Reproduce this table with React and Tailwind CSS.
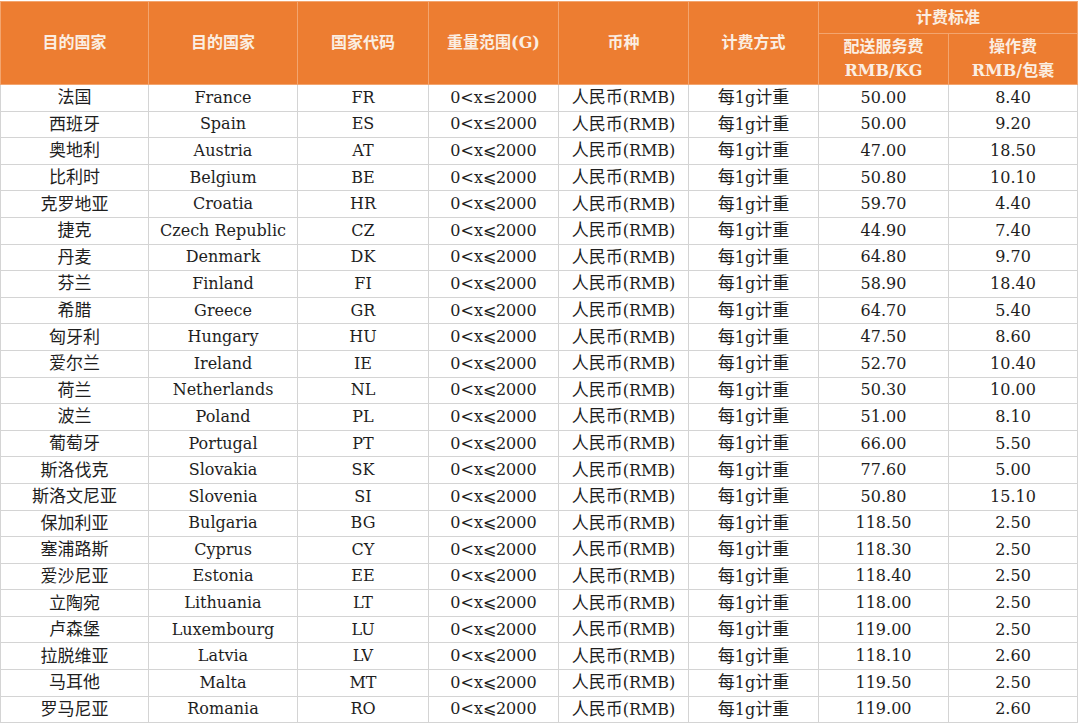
import React from "react";

const rows = [
  ["法国", "France", "FR", "≤", "50.00", "8.40"],
  ["西班牙", "Spain", "ES", "≤", "50.00", "9.20"],
  ["奥地利", "Austria", "AT", "⩽", "47.00", "18.50"],
  ["比利时", "Belgium", "BE", "⩽", "50.80", "10.10"],
  ["克罗地亚", "Croatia", "HR", "⩽", "59.70", "4.40"],
  ["捷克", "Czech Republic", "CZ", "⩽", "44.90", "7.40"],
  ["丹麦", "Denmark", "DK", "⩽", "64.80", "9.70"],
  ["芬兰", "Finland", "FI", "⩽", "58.90", "18.40"],
  ["希腊", "Greece", "GR", "⩽", "64.70", "5.40"],
  ["匈牙利", "Hungary", "HU", "⩽", "47.50", "8.60"],
  ["爱尔兰", "Ireland", "IE", "⩽", "52.70", "10.40"],
  ["荷兰", "Netherlands", "NL", "⩽", "50.30", "10.00"],
  ["波兰", "Poland", "PL", "⩽", "51.00", "8.10"],
  ["葡萄牙", "Portugal", "PT", "⩽", "66.00", "5.50"],
  ["斯洛伐克", "Slovakia", "SK", "⩽", "77.60", "5.00"],
  ["斯洛文尼亚", "Slovenia", "SI", "⩽", "50.80", "15.10"],
  ["保加利亚", "Bulgaria", "BG", "⩽", "118.50", "2.50"],
  ["塞浦路斯", "Cyprus", "CY", "⩽", "118.30", "2.50"],
  ["爱沙尼亚", "Estonia", "EE", "⩽", "118.40", "2.50"],
  ["立陶宛", "Lithuania", "LT", "⩽", "118.00", "2.50"],
  ["卢森堡", "Luxembourg", "LU", "⩽", "119.00", "2.50"],
  ["拉脱维亚", "Latvia", "LV", "⩽", "118.10", "2.60"],
  ["马耳他", "Malta", "MT", "⩽", "119.50", "2.50"],
  ["罗马尼亚", "Romania", "RO", "⩽", "119.00", "2.60"],
];

const th = "border border-[#f3a56f] font-bold text-[#fbeee2] text-[16px] text-center align-middle";
const td = "border border-[#d4d4d4] text-center align-middle p-0 leading-none";

export default function App() {
  return (
    <div className="w-[1080px] h-[726px] bg-white overflow-hidden pt-[1px]">
      <table
        className="table-fixed border-collapse w-[1077px] text-[#1e1e1e]"
        style={{ fontFamily: '"DejaVu Serif", "Noto Sans CJK SC", serif' }}
      >
        <colgroup>
          <col className="w-[148px]" />
          <col className="w-[149px]" />
          <col className="w-[131px]" />
          <col className="w-[130px]" />
          <col className="w-[130px]" />
          <col className="w-[130px]" />
          <col className="w-[130px]" />
          <col className="w-[129px]" />
        </colgroup>
        <thead className="bg-[#ed7d31]">
          <tr className="h-[32px]">
            <th rowSpan={2} className={th}>目的国家</th>
            <th rowSpan={2} className={th}>目的国家</th>
            <th rowSpan={2} className={th}>国家代码</th>
            <th rowSpan={2} className={th}>重量范围(G)</th>
            <th rowSpan={2} className={th}>币种</th>
            <th rowSpan={2} className={th}>计费方式</th>
            <th colSpan={2} className={th}>计费标准</th>
          </tr>
          <tr className="h-[51px]">
            <th className={th + " leading-[24px]"}>
              配送服务费
              <br />
              RMB/KG
            </th>
            <th className={th + " leading-[24px]"}>
              操作费
              <br />
              RMB/包裹
            </th>
          </tr>
        </thead>
        <tbody className="text-[16px]">
          {rows.map((r) => (
            <tr key={r[2]} className="h-[26.6px]">
              <td className={td + " text-[17px]"}>{r[0]}</td>
              <td className={td}>{r[1]}</td>
              <td className={td}>{r[2]}</td>
              <td className={td}>0&lt;x{r[3]}2000</td>
              <td className={td}>
                <span className="text-[17px]">人民币</span>(RMB)
              </td>
              <td className={td}>
                <span className="text-[17px]">每</span>1g<span className="text-[17px]">计重</span>
              </td>
              <td className={td}>{r[4]}</td>
              <td className={td}>{r[5]}</td>
            </tr>
          ))}
        </tbody>
      </table>
    </div>
  );
}
